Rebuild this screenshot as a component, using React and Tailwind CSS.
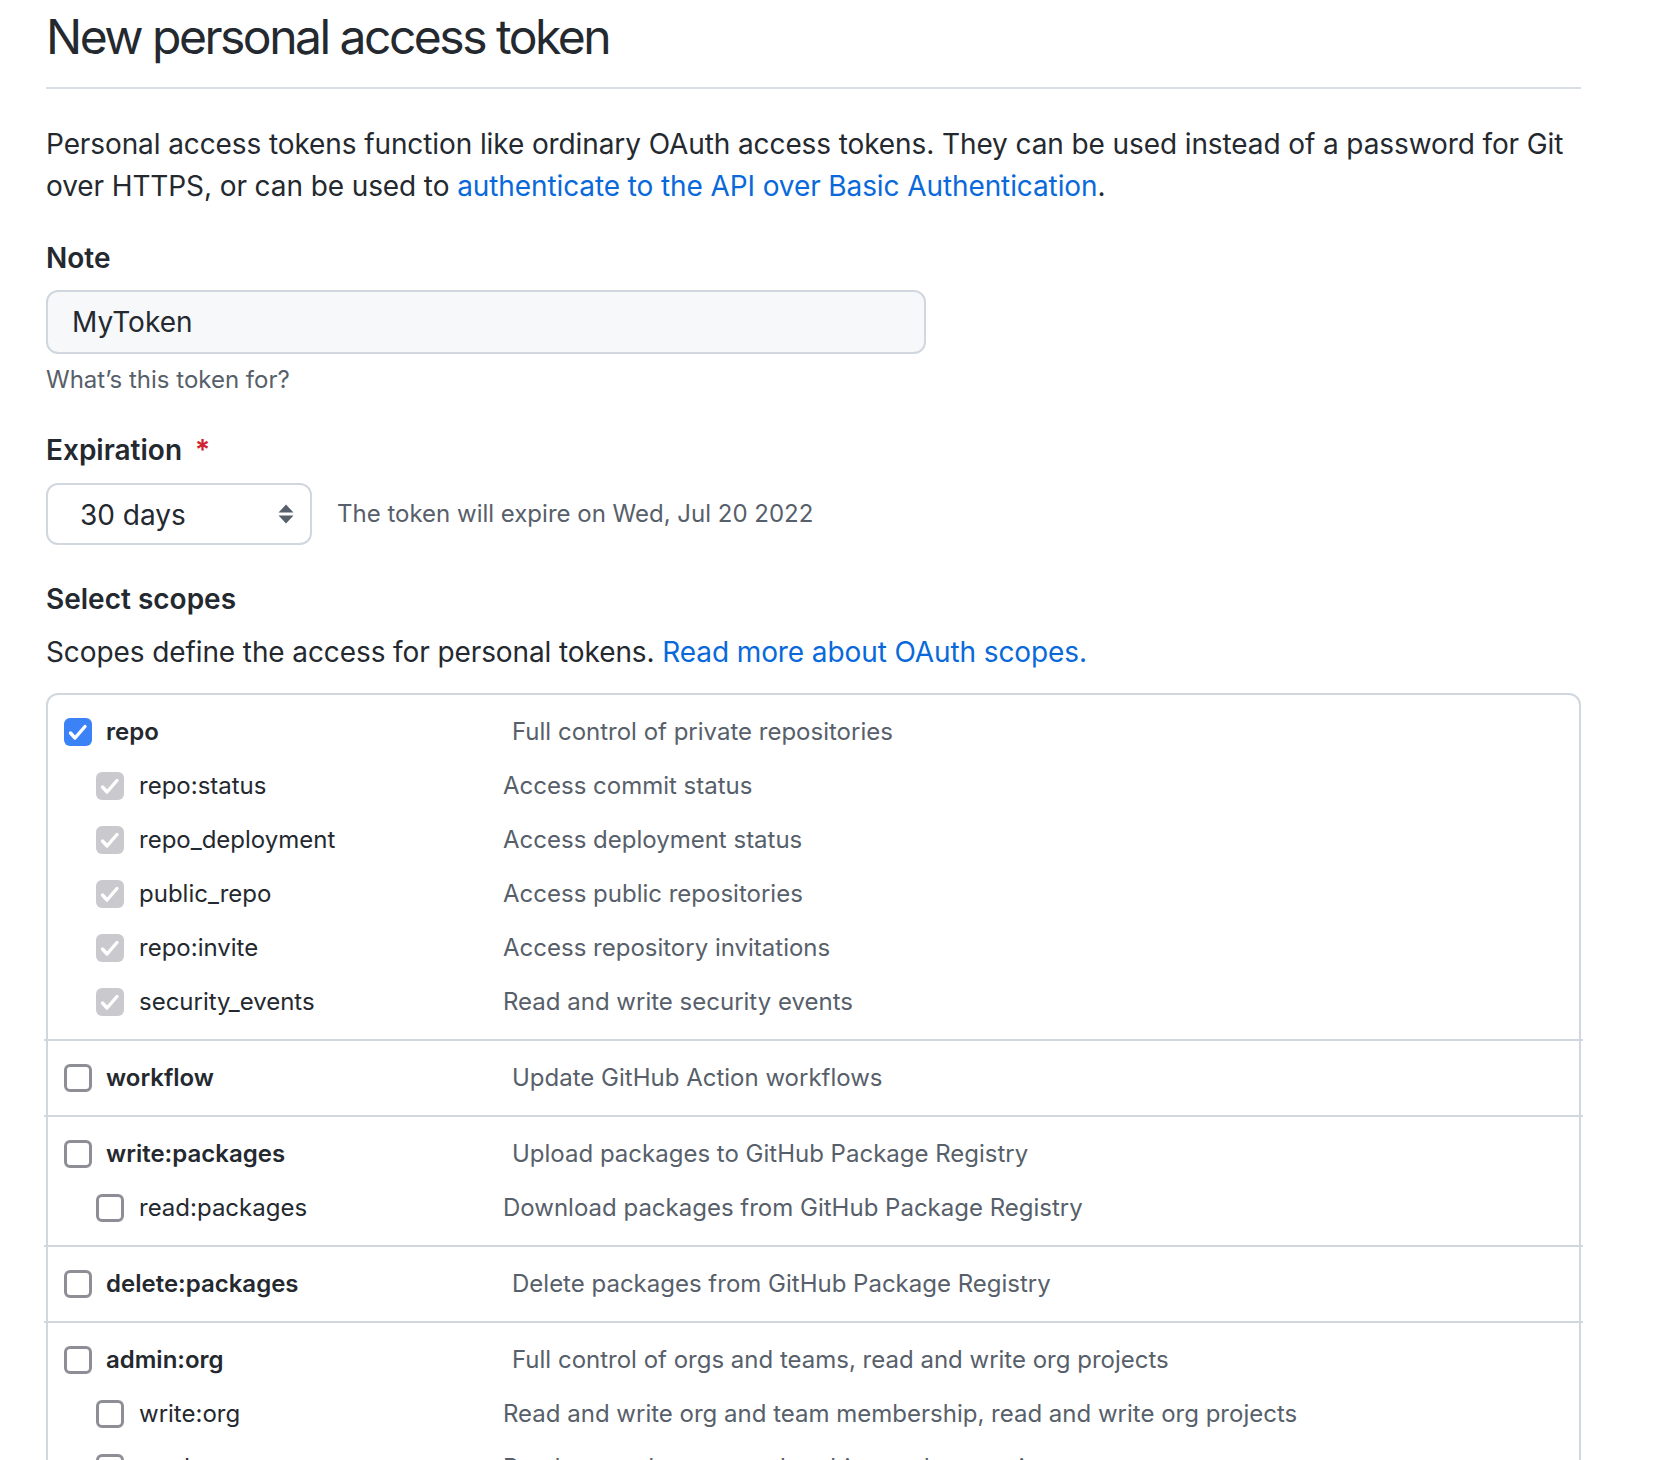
import { useState } from 'react'

const SCOPES = [
  {
    name: 'repo',
    desc: 'Full control of private repositories',
    children: [
      ['repo:status', 'Access commit status'],
      ['repo_deployment', 'Access deployment status'],
      ['public_repo', 'Access public repositories'],
      ['repo:invite', 'Access repository invitations'],
      ['security_events', 'Read and write security events'],
    ],
  },
  { name: 'workflow', desc: 'Update GitHub Action workflows', children: [] },
  {
    name: 'write:packages',
    desc: 'Upload packages to GitHub Package Registry',
    children: [['read:packages', 'Download packages from GitHub Package Registry']],
  },
  { name: 'delete:packages', desc: 'Delete packages from GitHub Package Registry', children: [] },
  {
    name: 'admin:org',
    desc: 'Full control of orgs and teams, read and write org projects',
    children: [
      ['write:org', 'Read and write org and team membership, read and write org projects'],
      ['read:org', 'Read org and team membership, read org projects'],
    ],
  },
  {
    name: 'admin:public_key',
    desc: 'Full control of user public keys',
    children: [
      ['write:public_key', 'Write user public keys'],
      ['read:public_key', 'Read user public keys'],
    ],
  },
]

function Checkbox({ state, onClick }) {
  if (state === 'empty') {
    return (
      <button
        onClick={onClick}
        className="w-[28px] h-[28px] shrink-0 rounded-[6px] border-[3px] border-[#8e8e96] bg-white"
      />
    )
  }
  return (
    <button
      onClick={onClick}
      className={`w-[28px] h-[28px] shrink-0 rounded-[6px] flex items-center justify-center ${
        state === 'checked' ? 'bg-[#3b82f6]' : 'bg-[#c9c9ce]'
      }`}
    >
      <svg width="28" height="28" viewBox="0 0 28 28" fill="none">
        <path d="M6.5 15 L11 20 L21 8.5" stroke="#fff" strokeWidth="3.4" strokeLinecap="round" strokeLinejoin="round" />
      </svg>
    </button>
  )
}

function ScopeGroup({ scope, checked, onToggle }) {
  return (
    <div className="py-[10px]">
      <div className="h-[54px] flex items-center pl-[16px]">
        <div className="w-[448px] flex items-center gap-[14px]">
          <Checkbox state={checked ? 'checked' : 'empty'} onClick={onToggle} />
          <span className="text-[24px] font-semibold text-[#24292f]">{scope.name}</span>
        </div>
        <span className="text-[24px] text-[#57606a]">{scope.desc}</span>
      </div>
      {scope.children.map(([name, desc]) => (
        <div key={name} className="h-[54px] flex items-center pl-[48px]">
          <div className="w-[407px] flex items-center gap-[15px]">
            <Checkbox state={checked ? 'disabled' : 'empty'} />
            <span className="text-[24px] text-[#24292f]">{name}</span>
          </div>
          <span className="text-[24px] text-[#57606a]">{desc}</span>
        </div>
      ))}
    </div>
  )
}

export default function App() {
  const [selected, setSelected] = useState({ repo: true })

  return (
    <div className="h-[1460px] overflow-hidden bg-white font-['Inter',sans-serif] text-[#24292f] pl-[46px]">
      <div className="w-[1535px]">
        {/* Subhead */}
        <div className="pt-[7px] pb-[20px] border-b-2 border-[#d8dee4]">
          <h1 className="text-[48px] leading-[60px] font-normal tracking-[-2.5px]">New personal access token</h1>
        </div>

        <p className="mt-[34px] text-[28px] leading-[42px] tracking-[-0.1px]">
          Personal access tokens function like ordinary OAuth access tokens. They can be used instead of a password for Git
          <br />
          over HTTPS, or can be used to{' '}
          <a href="#" className="text-[#0969da]">authenticate to the API over Basic Authentication</a>.
        </p>

        {/* Note */}
        <div className="mt-[30px] text-[28px] leading-[42px] font-semibold">Note</div>
        <input
          defaultValue="MyToken"
          className="mt-[11px] block w-[880px] h-[64px] px-[24px] text-[28px] text-[#24292f] bg-[#f6f8fa] border-2 border-[#d0d7de] rounded-[12px] outline-none"
        />
        <div className="mt-[8px] text-[24px] leading-[36px] text-[#57606a]">What’s this token for?</div>

        {/* Expiration */}
        <div className="mt-[31px] text-[28px] leading-[42px] font-semibold">
          Expiration <span className="ml-[6px] text-[#cf222e]">*</span>
        </div>
        <div className="mt-[12px] flex items-center gap-[25px]">
          <div className="w-[266px] h-[62px] flex items-center justify-between pl-[32px] pr-[16px] bg-white border-2 border-[#d0d7de] rounded-[12px]">
            <span className="text-[28px] pt-[2px]">30 days</span>
            <svg width="16" height="20" viewBox="0 0 16 20">
              <polygon points="8,0.5 15.5,8.5 0.5,8.5" fill="#57606a" />
              <polygon points="0.5,11.5 15.5,11.5 8,19.5" fill="#57606a" />
            </svg>
          </div>
          <span className="text-[24px] text-[#57606a]">The token will expire on Wed, Jul 20 2022</span>
        </div>

        {/* Scopes */}
        <div className="mt-[33px] text-[28px] leading-[42px] font-semibold">Select scopes</div>
        <p className="mt-[11px] text-[28px] leading-[42px] tracking-[-0.1px]">
          Scopes define the access for personal tokens.{' '}
          <a href="#" className="text-[#0969da]">Read more about OAuth scopes.</a>
        </p>

        <div className="mt-[20px] border-2 border-[#d0d7de] rounded-[12px]">
          {SCOPES.map((scope, i) => (
            <div key={scope.name}>
              {i > 0 && <div className="-mx-[4px] h-[2px] bg-[#d0d7de]" />}
              <ScopeGroup
                scope={scope}
                checked={!!selected[scope.name]}
                onToggle={() => setSelected(s => ({ ...s, [scope.name]: !s[scope.name] }))}
              />
            </div>
          ))}
        </div>
      </div>
    </div>
  )
}
